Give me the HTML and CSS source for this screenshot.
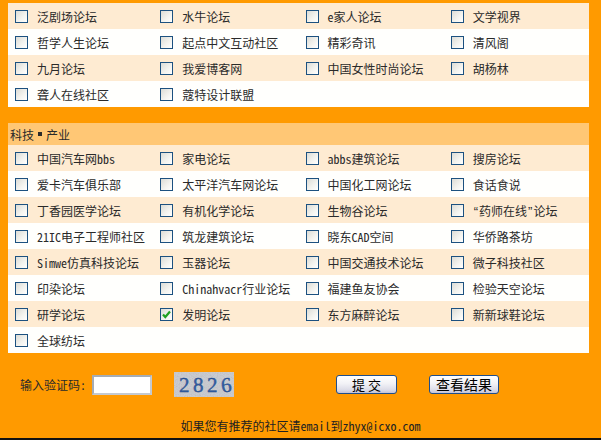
FILE: index.html
```html
<!DOCTYPE html>
<html lang="zh-CN">
  <head>
    <meta charset="UTF-8" />
    <title>社区推荐</title>
    <link rel="stylesheet" href="styles.css">
  </head>
  <body>
    <div class="page">
      <div class="panel">
        <div class="row">
          <label class="item"><span class="box"></span>泛剧场论坛</label>
          <label class="item"><span class="box"></span>水牛论坛</label>
          <label class="item"><span class="box"></span>e家人论坛</label>
          <label class="item"><span class="box"></span>文学视界</label>
        </div>
        <div class="row">
          <label class="item"><span class="box"></span>哲学人生论坛</label>
          <label class="item"><span class="box"></span>起点中文互动社区</label>
          <label class="item"><span class="box"></span>精彩奇讯</label>
          <label class="item"><span class="box"></span>清风阁</label>
        </div>
        <div class="row">
          <label class="item"><span class="box"></span>九月论坛</label>
          <label class="item"><span class="box"></span>我爱博客网</label>
          <label class="item"><span class="box"></span>中国女性时尚论坛</label>
          <label class="item"><span class="box"></span>胡杨林</label>
        </div>
        <div class="row">
          <label class="item"><span class="box"></span>聋人在线社区</label>
          <label class="item"><span class="box"></span>蔻特设计联盟</label>
        </div>
      </div>

      <div class="panel">
        <div class="panel-title">科技 <span class="dot"></span> 产业</div>
        <div class="row">
          <label class="item"><span class="box"></span>中国汽车网bbs</label>
          <label class="item"><span class="box"></span>家电论坛</label>
          <label class="item"><span class="box"></span>abbs建筑论坛</label>
          <label class="item"><span class="box"></span>搜房论坛</label>
        </div>
        <div class="row">
          <label class="item"><span class="box"></span>爱卡汽车俱乐部</label>
          <label class="item"><span class="box"></span>太平洋汽车网论坛</label>
          <label class="item"><span class="box"></span>中国化工网论坛</label>
          <label class="item"><span class="box"></span>食话食说</label>
        </div>
        <div class="row">
          <label class="item"><span class="box"></span>丁香园医学论坛</label>
          <label class="item"><span class="box"></span>有机化学论坛</label>
          <label class="item"><span class="box"></span>生物谷论坛</label>
          <label class="item"><span class="box"></span><span><span class="quote">“</span>药师在线<span class="quote">”</span>论坛</span></label>
        </div>
        <div class="row">
          <label class="item"><span class="box"></span>21IC电子工程师社区</label>
          <label class="item"><span class="box"></span>筑龙建筑论坛</label>
          <label class="item"><span class="box"></span>晓东CAD空间</label>
          <label class="item"><span class="box"></span>华侨路茶坊</label>
        </div>
        <div class="row">
          <label class="item"><span class="box"></span>Simwe仿真科技论坛</label>
          <label class="item"><span class="box"></span>玉器论坛</label>
          <label class="item"><span class="box"></span>中国交通技术论坛</label>
          <label class="item"><span class="box"></span>微子科技社区</label>
        </div>
        <div class="row">
          <label class="item"><span class="box"></span>印染论坛</label>
          <label class="item"><span class="box"></span>Chinahvacr行业论坛</label>
          <label class="item"><span class="box"></span>福建鱼友协会</label>
          <label class="item"><span class="box"></span>检验天空论坛</label>
        </div>
        <div class="row">
          <label class="item"><span class="box"></span>研学论坛</label>
          <label class="item">
            <span class="box checked">
              <svg width="11" height="11" viewBox="0 0 11 11"><path d="M2 5.5 L4.3 8 L9 2.5" fill="none" stroke="#21a121" stroke-width="2.2"/></svg>
            </span>发明论坛
          </label>
          <label class="item"><span class="box"></span>东方麻醉论坛</label>
          <label class="item"><span class="box"></span>新新球鞋论坛</label>
        </div>
        <div class="row">
          <label class="item"><span class="box"></span>全球纺坛</label>
        </div>
      </div>

      <div class="verify">
        <span class="verify-label">输入验证码:</span>
        <input type="text" class="code-input" />
        <svg class="captcha" width="60" height="25" viewBox="0 0 60 25">
          <defs>
            <filter id="noise">
              <feTurbulence type="fractalNoise" baseFrequency="0.9" numOctaves="2" seed="3" />
              <feColorMatrix type="saturate" values="0" />
            </filter>
          </defs>
          <rect width="60" height="25" fill="#c8cad0" />
          <rect width="60" height="25" filter="url(#noise)" opacity="0.3" />
          <g font-family="Liberation Serif, serif" font-size="21" fill="#3562a8" stroke="#1b3f7c" stroke-width="0.35">
            <text x="5" y="20">2</text>
            <text x="19" y="20">8</text>
            <text x="33" y="20">2</text>
            <text x="47" y="20" transform="rotate(-6 52 12)">6</text>
          </g>
        </svg>
        <button class="btn btn-submit">提 交</button>
        <button class="btn btn-result">查看结果</button>
      </div>

      <p class="note">如果您有推荐的社区请email到zhyx@icxo.com</p>
      <div class="bottom-line"></div>
    </div>
  </body>
</html>
```

FILE: styles.css
```css
body {
  margin: 0;
  background: #ff9a00;
  font-family: "Noto Sans Mono CJK SC", "Noto Sans CJK SC", sans-serif;
  font-size: 12px;
  color: #2a2a2a;
}
.page {
  width: 601px;
  height: 440px;
  overflow: hidden;
  padding-top: 3px;
  box-sizing: border-box;
}
.panel {
  width: 581px;
  margin-left: 8px;
  background: #fffffd;
}
.panel + .panel {
  margin-top: 16px;
}
.panel-title {
  display: flex;
  align-items: center;
  gap: 4px;
  height: 22px;
  padding-left: 2px;
  background: #ffc775;
  color: #2a2a2a;
}
.dot {
  width: 4px;
  height: 4px;
  background: #2a2a2a;
}
.row {
  display: grid;
  grid-template-columns: repeat(4, 1fr);
  height: 26px;
}
.panel-title ~ .row:nth-child(even),
.panel > .row:first-child,
.panel > .row:first-child ~ .row:nth-child(odd) {
  background: #feebd2;
}
.item {
  display: flex;
  align-items: center;
  gap: 9px;
  padding-left: 7px;
  white-space: nowrap;
}
.quote {
  font-family: "Liberation Sans", sans-serif;
  font-size: 13px;
  padding: 0 1px;
}
.box {
  display: inline-flex;
  align-items: center;
  justify-content: center;
  width: 11px;
  height: 11px;
  border: 1px solid #1c5180;
  background: linear-gradient(135deg, #dcdcd6 0%, #f4f4f0 60%, #ffffff 100%);
  flex-shrink: 0;
}
.verify {
  display: flex;
  align-items: center;
  height: 25px;
  margin-top: 19px;
  padding-left: 20px;
}
.verify-label {
  margin-right: 6px;
}
.code-input {
  width: 56px;
  height: 16px;
  padding: 0;
  border: 2px solid #a5acb5;
  border-right-color: #c4c9d0;
  border-bottom-color: #c4c9d0;
  background: #fff;
  margin-right: 22px;
}
.captcha {
  display: block;
  margin-right: 102px;
}
.btn {
  height: 19px;
  padding: 0;
  border: 1px solid #1f4e8c;
  border-radius: 3px;
  background: linear-gradient(#ffffff 0%, #f2f2f6 45%, #d9d9e6 85%, #c2c2d6 100%);
  font-family: "Noto Sans CJK SC", sans-serif;
  font-size: 13px;
  line-height: 17px;
  color: #000;
}
.btn-submit {
  width: 61px;
  margin-right: 32px;
}
.btn-result {
  width: 70px;
  font-size: 14px;
}
.note {
  margin: 21px 0 0;
  line-height: 16px;
  text-align: center;
  color: #222;
}
.bottom-line {
  margin-top: 4px;
  border-top: 2px solid #111;
}
```
